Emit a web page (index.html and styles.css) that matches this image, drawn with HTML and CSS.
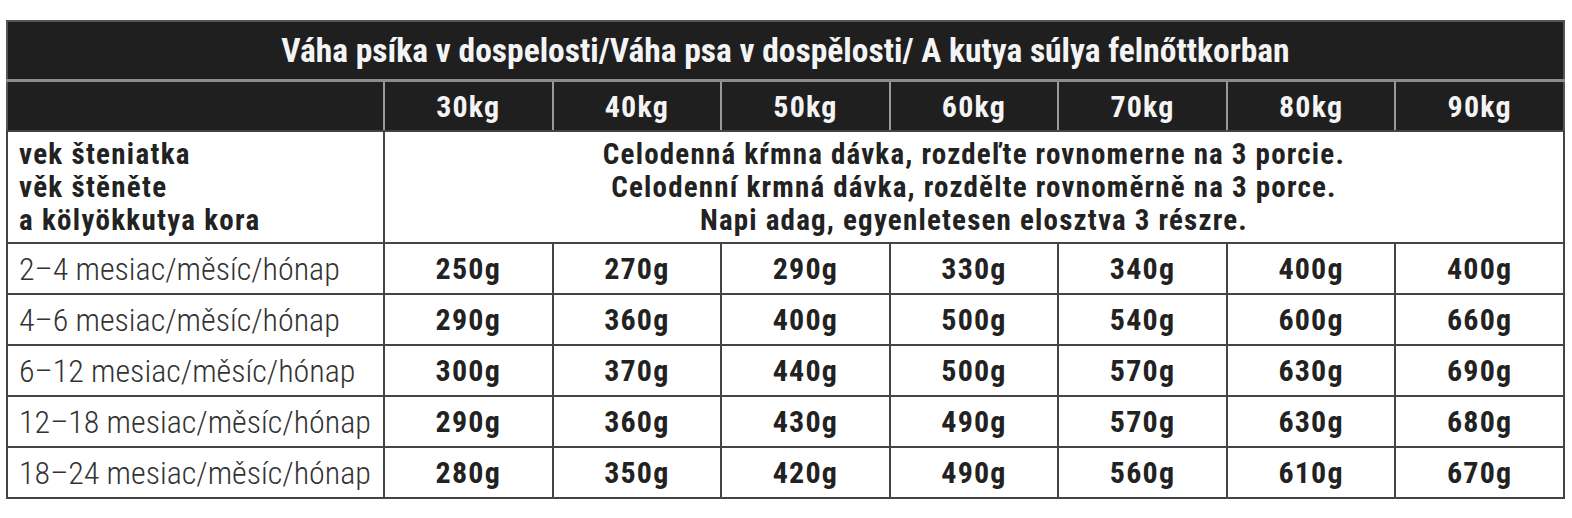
FILE: index.html
```html
<!DOCTYPE html>
<html>
<head>
<meta charset="utf-8">
<link rel="stylesheet" href="styles.css">
</head>
<body>
<table class="feed">
  <colgroup>
    <col class="c-label">
    <col class="c-val"><col class="c-val"><col class="c-val"><col class="c-val"><col class="c-val"><col class="c-val"><col class="c-val">
  </colgroup>
  <thead>
    <tr class="title-row"><th colspan="8">Váha psíka v dospelosti/Váha psa v dospělosti/ A kutya súlya felnőttkorban</th></tr>
    <tr class="kg-row">
      <th></th><th>30kg</th><th>40kg</th><th>50kg</th><th>60kg</th><th>70kg</th><th>80kg</th><th>90kg</th>
    </tr>
  </thead>
  <tbody>
    <tr class="note-row">
      <td class="age-head">vek šteniatka<br>věk štěněte<br>a kölyökkutya kora</td>
      <td colspan="7" class="note">Celodenná kŕmna dávka, rozdeľte rovnomerne na 3 porcie.<br>Celodenní krmná dávka, rozdělte rovnoměrně na 3 porce.<br>Napi adag, egyenletesen elosztva 3 részre.</td>
    </tr>
    <tr><td class="age">2–4 mesiac/měsíc/hónap</td><td>250g</td><td>270g</td><td>290g</td><td>330g</td><td>340g</td><td>400g</td><td>400g</td></tr>
    <tr><td class="age">4–6 mesiac/měsíc/hónap</td><td>290g</td><td>360g</td><td>400g</td><td>500g</td><td>540g</td><td>600g</td><td>660g</td></tr>
    <tr><td class="age">6–12 mesiac/měsíc/hónap</td><td>300g</td><td>370g</td><td>440g</td><td>500g</td><td>570g</td><td>630g</td><td>690g</td></tr>
    <tr><td class="age">12–18 mesiac/měsíc/hónap</td><td>290g</td><td>360g</td><td>430g</td><td>490g</td><td>570g</td><td>630g</td><td>680g</td></tr>
    <tr><td class="age">18–24 mesiac/měsíc/hónap</td><td>280g</td><td>350g</td><td>420g</td><td>490g</td><td>560g</td><td>610g</td><td>670g</td></tr>
  </tbody>
</table>
</body>
</html>
```
FILE: styles.css
```css
html, body {
  margin: 0;
  padding: 0;
  background: #fff;
}
body {
  padding: 20px 0 0 6px;
  font-family: "Roboto Condensed", "DejaVu Sans Condensed", sans-serif;
  color: #222;
}
.feed {
  border-collapse: collapse;
  table-layout: fixed;
  width: 1557px;
  border: 2px solid #555;
}
.c-label { width: 377px; }
.c-val { width: 168.57px; }

.feed th, .feed td {
  padding: 0;
  border: 2px solid #444;
  text-align: center;
  font-weight: 700;
}
.title-row th {
  background: #1f1f1f;
  color: #f4f4f4;
  height: 57px;
  font-size: 33.5px;
  border-color: #555 #555 #8c8c8c #555;
  border-bottom-width: 3px;
}
.kg-row th {
  background: #1f1f1f;
  color: #f4f4f4;
  height: 48px;
  font-size: 30px;
  letter-spacing: 1.2px;
  border-left: 2px solid #9a9a9a;
  border-right: 2px solid #9a9a9a;
  border-bottom: 2px solid #444;
}
.kg-row th:first-child { border-left-color: #555; }
.kg-row th:last-child { border-right-color: #555; }

.feed tbody td {
  height: 49px;
  font-size: 30px;
  letter-spacing: 1.2px;
}
.feed tbody tr.note-row td { height: 110px; }
.feed td.age-head {
  text-align: left;
  font-size: 29px;
  letter-spacing: 1.3px;
  line-height: 33px;
  padding-left: 11px;
}
.feed td.note {
  font-size: 29px;
  letter-spacing: 1.2px;
  line-height: 33px;
}
.feed td.age {
  text-align: left;
  font-weight: 300;
  padding-left: 11px;
  color: #333;
  font-size: 32px;
  letter-spacing: 0;
}
```
